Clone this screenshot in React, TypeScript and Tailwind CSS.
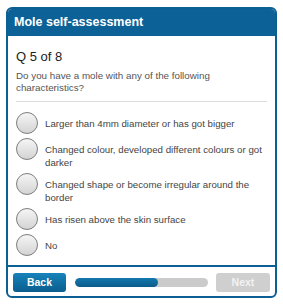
import * as React from 'react';

// Answer options for the current question
const options = [
  "Larger than 4mm diameter or has got bigger",
  "Changed colour, developed different colours or got darker",
  "Changed shape or become irregular around the border",
  "Has risen above the skin surface",
  "No",
];

function App() {
  const current = 5;
  const total = 8;
  const progress = (current / total) * 100;

  return (
    <div className="min-h-screen bg-white pt-[7px] pl-[6px] font-['Liberation_Sans',Arial,sans-serif]">
      <div className="w-[271px] h-[291px] flex flex-col border-2 border-[#0c5f93] rounded-[6px] overflow-hidden bg-white">
        {/* Header */}
        <div className="h-[27px] bg-[#0c6197] flex items-center pl-[6px]">
          <h1 className="text-[12.5px] font-bold text-white leading-none">Mole self-assessment</h1>
        </div>

        {/* Question body */}
        <div className="flex-1 pl-[8px] pr-[4px] pt-[13px]">
          <p className="text-[13px] leading-[15px] text-[#222]">Q {current} of {total}</p>
          <p className="mt-[6px] text-[9.8px] leading-[12px] text-[#555]">
            Do you have a mole with any of the following characteristics?
          </p>
          <div className="mt-[7px] mr-[4px] border-t border-[#dcdcdc]"></div>

          <div className="mt-[10px] flex flex-col gap-[4px]">
            {options.map((option, index) => (
              <label key={index} className="flex items-start gap-[7px] cursor-pointer">
                <span className="shrink-0 w-[22px] h-[22px] rounded-full border-[1.5px] border-[#7d7d7d] bg-gradient-to-b from-[#f5f5f5] to-[#d4d4d4]"></span>
                <span className="pt-[5px] text-[9.7px] leading-[13px] text-[#444]">{option}</span>
              </label>
            ))}
          </div>
        </div>

        {/* Footer with navigation */}
        <div className="border-t-2 border-[#0c5f93] flex items-center pl-[5px] pr-[5px] pt-[6px] pb-[4px]">
          <button className="w-[53px] h-[19px] rounded-[3px] bg-gradient-to-b from-[#1783bb] to-[#0a5e8e] text-white text-[10.5px] font-bold">
            Back
          </button>
          <div className="ml-[9px] w-[133px] h-[9px] rounded-full bg-[#cbcbcb] overflow-hidden">
            <div className="h-full rounded-full bg-gradient-to-b from-[#1479ad] to-[#0a5c8b]" style={{ width: `${progress}%` }}></div>
          </div>
          <button className="ml-[8px] w-[54px] h-[19px] rounded-[3px] bg-[#cfcfcf] text-[#f2f2f2] text-[10.5px] font-bold">
            Next
          </button>
        </div>
      </div>
    </div>
  );
}

export default App;
